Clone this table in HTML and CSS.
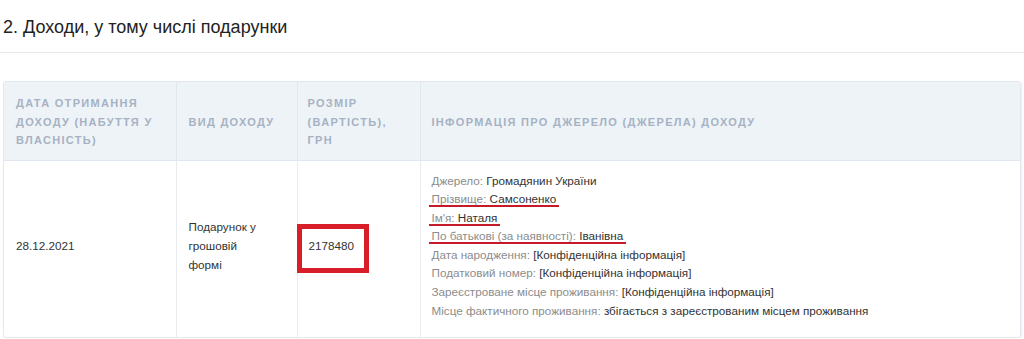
FILE: index.html
```html
<!DOCTYPE html>
<html lang="uk">
<head>
<meta charset="utf-8">
<title>Доходи</title>
<link rel="stylesheet" href="styles.css">
</head>
<body>
<h2 class="section-title">2. Доходи, у тому числі подарунки</h2>
<hr class="divider">
<div class="table-wrap">
  <table class="income">
    <colgroup>
      <col class="c-date">
      <col class="c-type">
      <col class="c-sum">
      <col class="c-info">
    </colgroup>
    <thead>
      <tr>
        <th>Дата отримання доходу (набуття у власність)</th>
        <th>Вид доходу</th>
        <th>Розмір (вартість), грн</th>
        <th>Інформація про джерело (джерела) доходу</th>
      </tr>
    </thead>
    <tbody>
      <tr>
        <td>28.12.2021</td>
        <td><span class="narrow">Подарунок у грошовій формі</span></td>
        <td><span class="boxed">2178480</span></td>
        <td>
          <div class="line"><span class="lbl">Джерело:</span> Громадянин України</div>
          <div class="line"><span class="mark"><span class="lbl">Прізвище:</span> Самсоненко</span></div>
          <div class="line"><span class="mark"><span class="lbl">Ім'я:</span> Наталя</span></div>
          <div class="line"><span class="mark"><span class="lbl">По батькові (за наявності):</span> Іванівна</span></div>
          <div class="line"><span class="lbl">Дата народження:</span> [Конфіденційна інформація]</div>
          <div class="line"><span class="lbl">Податковий номер:</span> [Конфіденційна інформація]</div>
          <div class="line"><span class="lbl">Зареєстроване місце проживання:</span> [Конфіденційна інформація]</div>
          <div class="line"><span class="lbl">Місце фактичного проживання:</span> збігається з зареєстрованим місцем проживання</div>
        </td>
      </tr>
    </tbody>
  </table>
</div>
</body>
</html>
```
FILE: styles.css
```css
*, *::before, *::after { box-sizing: border-box; }
html, body { margin: 0; padding: 0; background: #fff; }
body {
  font-family: "Liberation Sans", Arial, sans-serif;
  color: #333;
}
.section-title {
  margin: 0;
  padding: 16px 3px 0;
  font-size: 18px;
  font-weight: normal;
  line-height: 22px;
  color: #222;
}
.divider {
  margin: 14px 0 0;
  border: 0;
  border-top: 1px solid #e6e8ea;
  height: 0;
}
.table-wrap {
  margin: 28px 3px 0;
  width: 1018px;
  border: 1px solid #e3e8ee;
  border-radius: 3px;
  box-shadow: 1px 1px 2px rgba(0,0,0,0.08);
}
.income {
  width: 100%;
  border-collapse: collapse;
  table-layout: fixed;
}
.c-date { width: 172px; }
.c-type { width: 121px; }
.c-sum { width: 123px; }
.income th {
  background: #eef3f8;
  color: #a6b2c3;
  font-size: 11px;
  font-weight: bold;
  letter-spacing: 1.3px;
  text-transform: uppercase;
  text-align: left;
  line-height: 18.5px;
  padding: 12px 10px 10px 12px;
  border-left: 1px solid #e1e7ee;
  border-bottom: 1px solid #e1e7ee;
  vertical-align: middle;
}
.income th:nth-child(3) { padding-left: 10px; }
.income th:nth-child(4) { padding-left: 11px; }
.income th:first-child, .income td:first-child { border-left: 0; }
.income td {
  font-size: 11.7px;
  line-height: 18.6px;
  padding: 11px 10px 17px 12px;
  border-left: 1px solid #e8ecf1;
  vertical-align: middle;
  color: #333;
}
.income td:nth-child(3) { padding-left: 11px; }
.income td:nth-child(4) { padding-left: 11px; }
.narrow { display: inline-block; max-width: 80px; line-height: 19px; }
.boxed {
  position: relative;
  display: inline-block;
  line-height: 18.6px;
}
.boxed::after {
  content: "";
  position: absolute;
  left: -12px;
  top: -13px;
  width: 72px;
  height: 49px;
  border: 5px solid #d81e29;
}
.lbl { color: #8c8c8c; }
.mark { position: relative; }
.mark::after {
  content: "";
  position: absolute;
  left: -3px;
  right: -3px;
  bottom: -2px;
  height: 2px;
  background: #c8192a;
}
```
